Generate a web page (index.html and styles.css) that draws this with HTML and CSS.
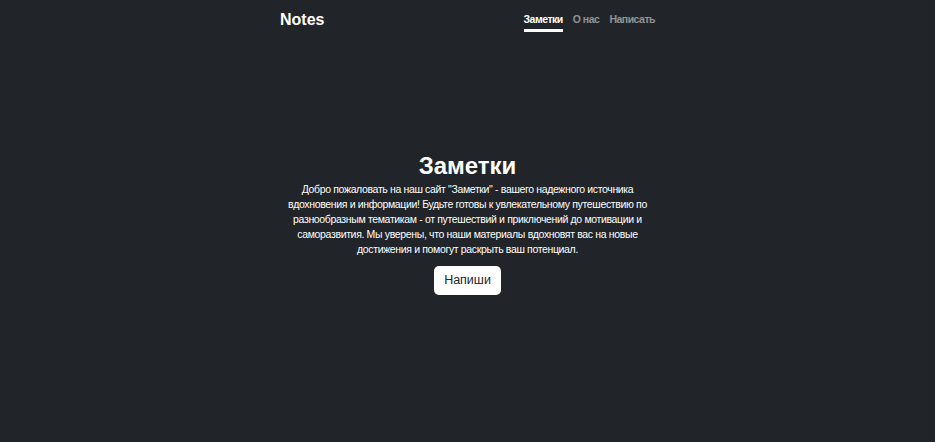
FILE: index.html
```html
<!DOCTYPE html>
<html lang="ru">
<head>
<meta charset="utf-8">
<title>Notes</title>
<link rel="stylesheet" href="styles.css">
</head>
<body>
<div class="cover">
  <header class="masthead">
    <h3 class="brand">Notes</h3>
    <nav class="nav">
      <a class="nav-link active" href="#">Заметки</a>
      <a class="nav-link" href="#">О нас</a>
      <a class="nav-link" href="#">Написать</a>
    </nav>
  </header>
  <main class="hero">
    <h1 class="title">Заметки</h1>
    <p class="lead">Добро пожаловать на наш сайт "Заметки" - вашего надежного источника вдохновения и информации! Будьте готовы к увлекательному путешествию по разнообразным тематикам - от путешествий и приключений до мотивации и саморазвития. Мы уверены, что наши материалы вдохновят вас на новые достижения и помогут раскрыть ваш потенциал.</p>
    <a class="btn" href="#">Напиши</a>
  </main>
</div>
</body>
</html>
```

FILE: styles.css
```css
html, body {
  height: 100%;
}
body {
  margin: 0;
  background: #212529;
  color: #fff;
  font-family: "Liberation Sans", Arial, sans-serif;
}
.cover {
  width: 375px;
  height: 100%;
  margin: 0 auto;
  display: flex;
  flex-direction: column;
  box-sizing: border-box;
}
.masthead {
  display: flex;
  justify-content: space-between;
  align-items: flex-start;
  padding-top: 7px;
}
.brand {
  margin: 0;
  font-size: 16px;
  font-weight: 700;
  line-height: 26px;
}
.nav {
  display: flex;
  gap: 10px;
  padding-top: 5px;
}
.nav-link {
  color: rgba(255,255,255,.5);
  text-decoration: none;
  font-size: 10.5px;
  letter-spacing: -0.5px;
  font-weight: 700;
  line-height: 15px;
  padding-bottom: 2px;
  border-bottom: 3px solid transparent;
}
.nav-link.active {
  color: #fff;
  border-bottom-color: #fff;
}
.hero {
  margin: auto 0;
  display: flex;
  flex-direction: column;
  align-items: center;
  text-align: center;
  padding-bottom: 30px;
}
.title {
  margin: 0;
  font-size: 24px;
  font-weight: 700;
  line-height: 32px;
}
.lead {
  margin: 0 0 9px;
  font-size: 10.5px;
  letter-spacing: -0.35px;
  line-height: 15px;
  width: 362px;
}
.btn {
  display: inline-block;
  background: #fff;
  color: #212529;
  text-decoration: none;
  font-size: 12.5px;
  line-height: 19px;
  padding: 5px 10px;
  border-radius: 5px;
}
```
